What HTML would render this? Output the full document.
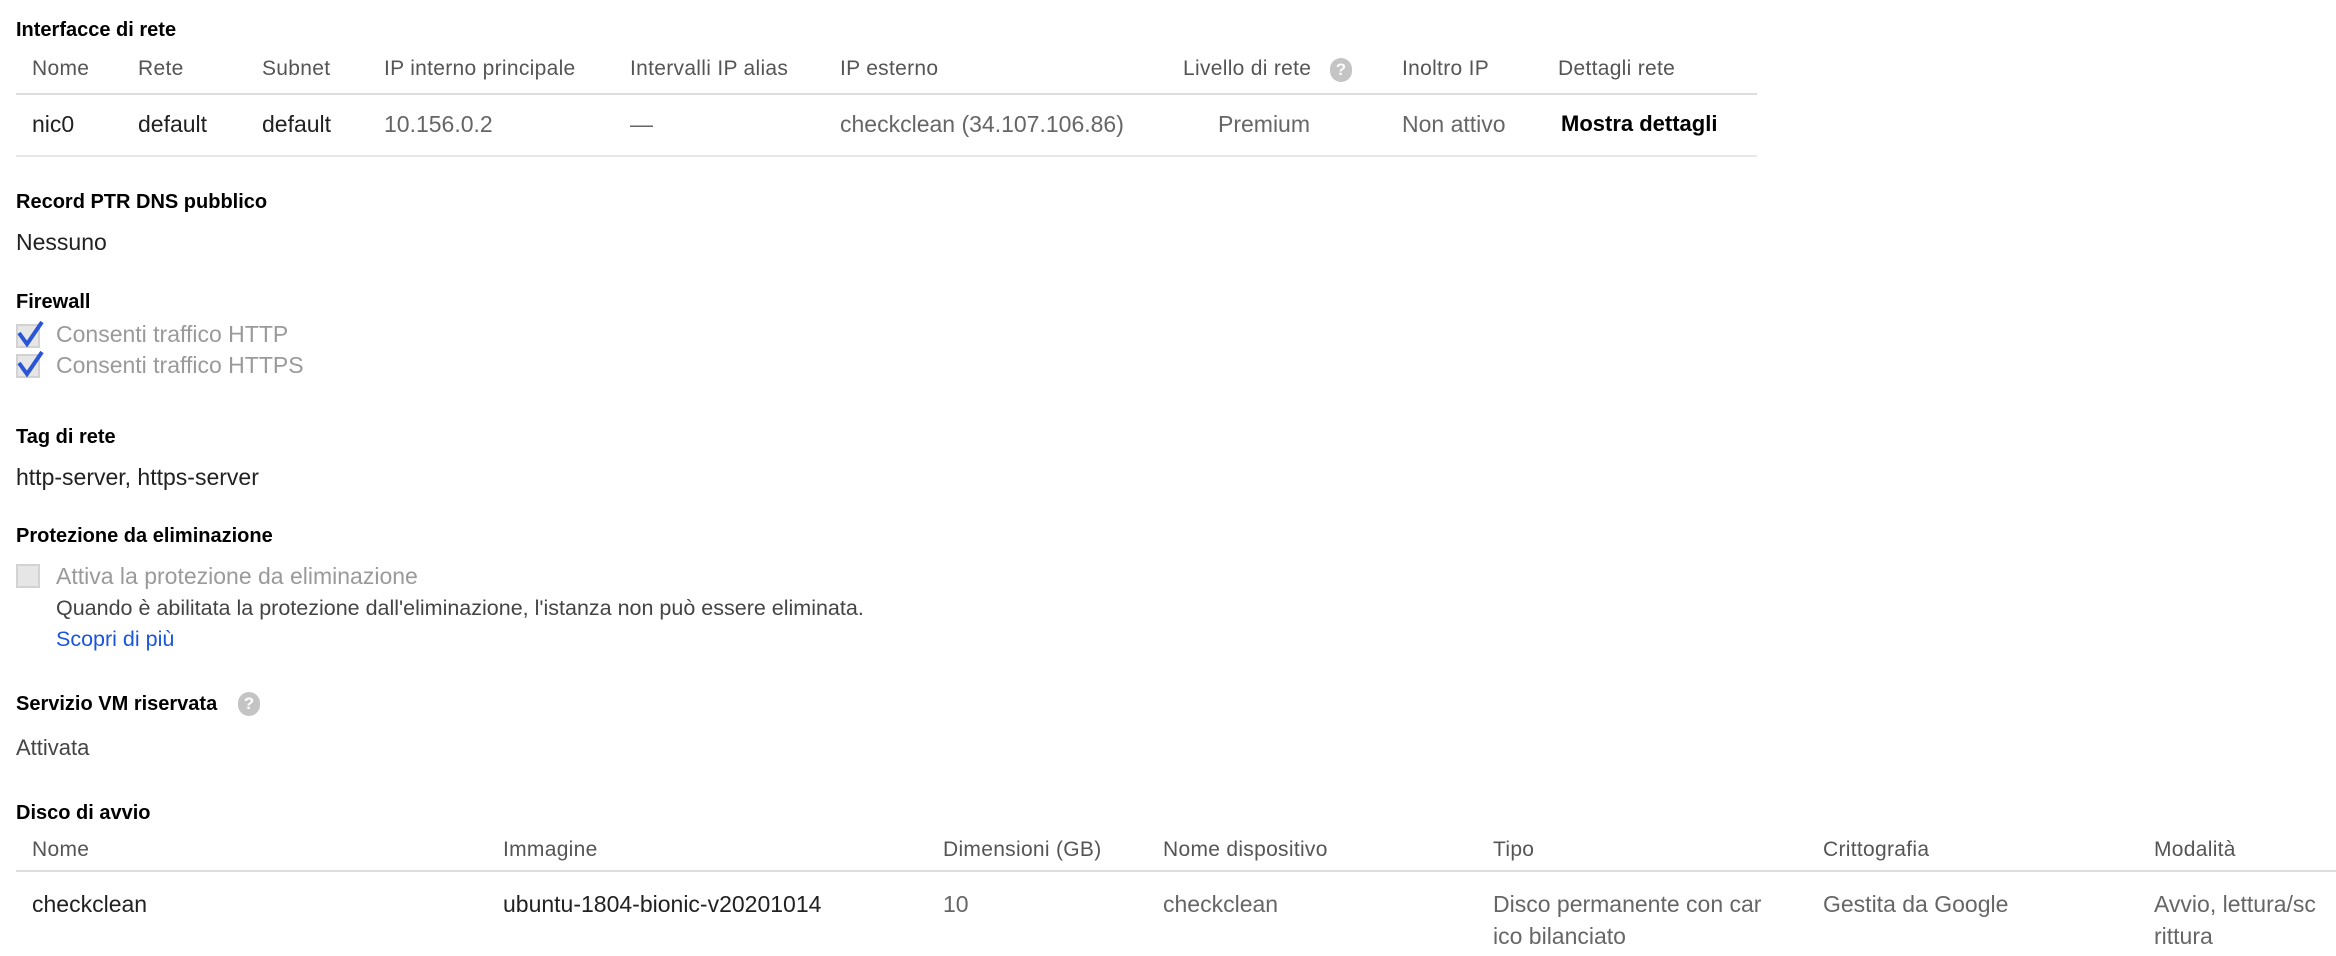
<!DOCTYPE html>
<html><head><meta charset="utf-8"><style>
body{margin:0;width:2336px;height:956px;background:#fff;position:relative;overflow:hidden;font-family:"Liberation Sans",Arial,sans-serif;}
.t{position:absolute;white-space:nowrap;line-height:24px;}
.h{font-size:20px;color:#000;font-weight:bold;}
.th{font-size:21px;color:#555;letter-spacing:0.3px;}
.td{font-size:23px;color:#212121;}
.g{color:#666;}
.line{position:absolute;height:2px;background:#ddd;}
.line2{position:absolute;height:2px;background:#e8e8e8;}
.q{position:absolute;width:22px;height:24px;border-radius:11px;background:#c4c4c4;color:#fff;font-size:17px;font-weight:bold;text-align:center;line-height:24px;}
.cb{position:absolute;width:20px;height:20px;border:2px solid #d2d2d2;background:#e6e6e6;}
</style></head><body>
<div class="t h" style="left:16px;top:18px">Interfacce di rete</div>
<div class="t th" style="left:32px;top:57px">Nome</div>
<div class="t th" style="left:138px;top:57px">Rete</div>
<div class="t th" style="left:262px;top:57px">Subnet</div>
<div class="t th" style="left:384px;top:57px">IP interno principale</div>
<div class="t th" style="left:630px;top:57px">Intervalli IP alias</div>
<div class="t th" style="left:840px;top:57px">IP esterno</div>
<div class="t th" style="left:1183px;top:57px">Livello di rete</div>
<div class="q" style="left:1330px;top:58px">?</div>
<div class="t th" style="left:1402px;top:57px">Inoltro IP</div>
<div class="t th" style="left:1558px;top:57px">Dettagli rete</div>
<div class="line" style="left:16px;top:93px;width:1741px"></div>
<div class="t td" style="left:32px;top:112px">nic0</div>
<div class="t td" style="left:138px;top:112px">default</div>
<div class="t td" style="left:262px;top:112px">default</div>
<div class="t td g" style="left:384px;top:112px">10.156.0.2</div>
<div class="t td g" style="left:630px;top:112px">—</div>
<div class="t td g" style="left:840px;top:112px">checkclean (34.107.106.86)</div>
<div class="t td g" style="left:1218px;top:112px">Premium</div>
<div class="t td g" style="left:1402px;top:112px">Non attivo</div>
<div class="t td" style="left:1561px;top:112px;font-weight:bold;color:#000;font-size:22px">Mostra dettagli</div>
<div class="line2" style="left:16px;top:155px;width:1741px"></div>

<div class="t h" style="left:16px;top:190px">Record PTR DNS pubblico</div>
<div class="t td" style="left:16px;top:230px">Nessuno</div>

<div class="t h" style="left:16px;top:290px">Firewall</div>
<div class="cb" style="left:16px;top:324px"></div>
<svg style="position:absolute;left:14px;top:318px" width="34" height="32"><path d="M5 15 L13 26 L28 4" stroke="#2a56d6" stroke-width="4" fill="none"/></svg>
<div class="t td" style="left:56px;top:322px;color:#9a9a9a">Consenti traffico HTTP</div>
<div class="cb" style="left:16px;top:354px"></div>
<svg style="position:absolute;left:14px;top:348px" width="34" height="32"><path d="M5 15 L13 26 L28 4" stroke="#2a56d6" stroke-width="4" fill="none"/></svg>
<div class="t td" style="left:56px;top:353px;color:#9a9a9a">Consenti traffico HTTPS</div>

<div class="t h" style="left:16px;top:425px">Tag di rete</div>
<div class="t td" style="left:16px;top:465px">http-server, https-server</div>

<div class="t h" style="left:16px;top:524px">Protezione da eliminazione</div>
<div class="cb" style="left:16px;top:564px"></div>
<div class="t td" style="left:56px;top:564px;color:#9a9a9a">Attiva la protezione da eliminazione</div>
<div class="t" style="left:56px;top:596px;font-size:21.5px;color:#444">Quando è abilitata la protezione dall'eliminazione, l'istanza non può essere eliminata.</div>
<div class="t" style="left:56px;top:627px;font-size:21.5px;color:#1a56db">Scopri di più</div>

<div class="t h" style="left:16px;top:692px">Servizio VM riservata</div>
<div class="q" style="left:238px;top:692px">?</div>
<div class="t" style="left:16px;top:736px;font-size:22px;color:#444">Attivata</div>

<div class="t h" style="left:16px;top:801px">Disco di avvio</div>
<div class="t th" style="left:32px;top:838px">Nome</div>
<div class="t th" style="left:503px;top:838px">Immagine</div>
<div class="t th" style="left:943px;top:838px">Dimensioni (GB)</div>
<div class="t th" style="left:1163px;top:838px">Nome dispositivo</div>
<div class="t th" style="left:1493px;top:838px">Tipo</div>
<div class="t th" style="left:1823px;top:838px">Crittografia</div>
<div class="t th" style="left:2154px;top:838px">Modalità</div>
<div class="line" style="left:16px;top:870px;width:2320px"></div>
<div class="t td" style="left:32px;top:892px">checkclean</div>
<div class="t td" style="left:503px;top:892px">ubuntu-1804-bionic-v20201014</div>
<div class="t td g" style="left:943px;top:892px">10</div>
<div class="t td g" style="left:1163px;top:892px">checkclean</div>
<div class="t td g" style="left:1493px;top:892px">Disco permanente con car</div>
<div class="t td g" style="left:1493px;top:924px">ico bilanciato</div>
<div class="t td g" style="left:1823px;top:892px">Gestita da Google</div>
<div class="t td g" style="left:2154px;top:892px">Avvio, lettura/sc</div>
<div class="t td g" style="left:2154px;top:924px">rittura</div>
</body></html>
